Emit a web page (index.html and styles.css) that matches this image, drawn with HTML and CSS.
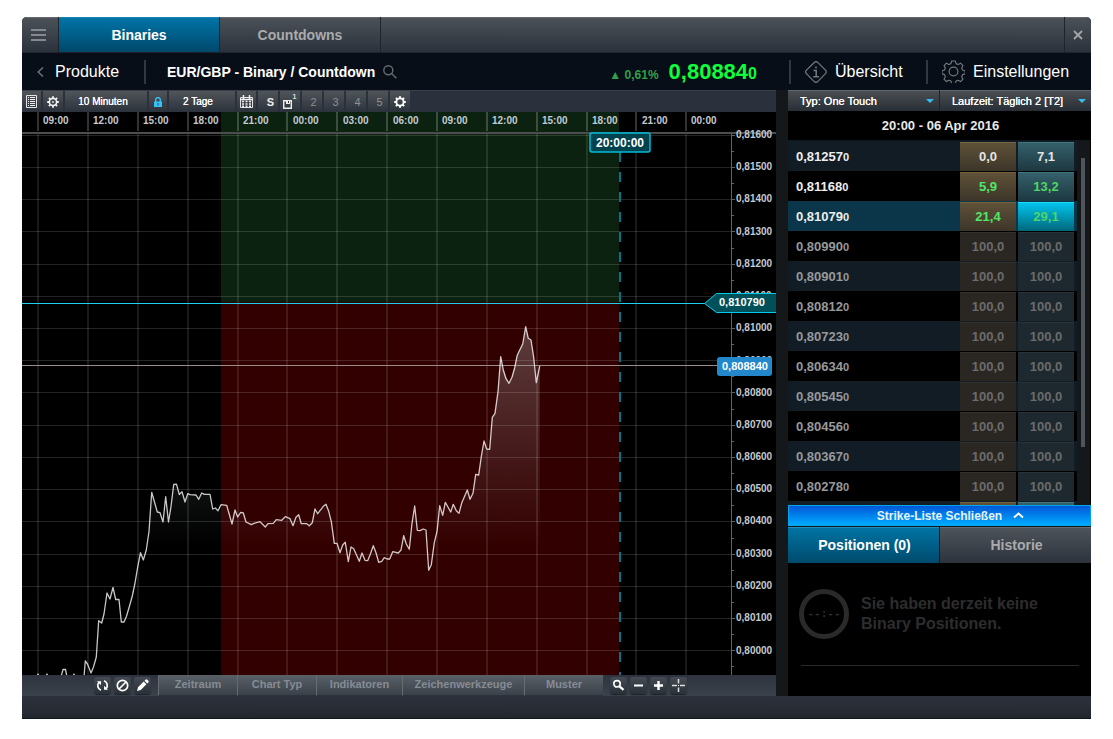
FILE: index.html
```html
<!DOCTYPE html>
<html lang="de">
<head>
<meta charset="utf-8">
<meta name="viewport" content="width=device-width, initial-scale=1">
<title>EUR/GBP - Binary / Countdown</title>
<link rel="stylesheet" href="styles.css">
</head>
<body>
<div class="window">
  <nav class="tabbar">
    <button class="tabbar-menu" type="button" aria-label="Menü">
      <svg width="15" height="12" viewBox="0 0 15 12"><path d="M0 1h15M0 6h15M0 11h15" stroke="#85888c" stroke-width="2"/></svg>
    </button>
    <button class="tabbar-tab is-active" type="button">Binaries</button>
    <button class="tabbar-tab" type="button">Countdowns</button>
    <span class="tabbar-fill"></span>
    <button class="tabbar-close" type="button" aria-label="Fenster">
      <svg width="10" height="10" viewBox="0 0 10 10"><path d="M1 1l8 8M9 1l-8 8" stroke="#a4a6a8" stroke-width="1.8"/></svg>
    </button>
  </nav>

  <header class="header">
    <a class="back" href="#">
      <svg width="7" height="10" viewBox="0 0 7 10"><path d="M6 .5L1.2 5 6 9.500" fill="none" stroke="#6e7377" stroke-width="1.500"/></svg>
      <span>Produkte</span>
    </a>
    <h1 class="title">EUR/GBP - Binary / Countdown</h1>
    <svg class="search" width="14" height="14" viewBox="0 0 14 14" fill="none" stroke="#676b70" stroke-width="1.400"><circle cx="5.300" cy="5.300" r="4.500"/><path d="M8.600 8.600L13.400 13.200"/></svg>
    <div class="quote">
      <span class="change">▲ 0,61%</span>
      <span class="price">0,80884<small>0</small></span>
    </div>
    <nav class="links">
      <a class="link link-overview" href="#">
        <svg width="22" height="22" viewBox="0 0 22 22" fill="none" stroke="#75797d" stroke-width="1.200"><path d="M9.500 1.200q1.500-1.200 3 0l8.200 8.200q1.200 1.600 0 3l-8.200 8.400q-1.500 1.200-3 0L1.200 12.400q-1.200-1.500 0-3z"/><path d="M11 5.500v2M8.500 9.500h2.700v6.200M8.200 15.700h5.800" stroke-width="1.500"/></svg>
        <span>Übersicht</span>
      </a>
      <a class="link" href="#">
        <svg width="23" height="23" viewBox="-12 -12 24 24" fill="none" stroke="#75797d" stroke-width="1.200"><path d="M-1.800-11h3.600l.9 2.800 2.100.9 2.600-1.400 2.500 2.500-1.400 2.600.9 2.100 2.800.9v3l-2.800.9-.9 2.100 1.400 2.600-2.500 2.500-2.600-1.400-2.100.9-.9 2.500h-3.600l-.9-2.500-2.100-.9-2.600 1.400-2.500-2.500 1.400-2.600-.9-2.100-2.600-.9v-3l2.600-.9.9-2.100-1.400-2.600 2.500-2.500 2.600 1.400 2.100-.9z" stroke-linejoin="round"/><circle r="4.600"/></svg>
        <span>Einstellungen</span>
      </a>
    </nav>
  </header>

  <main class="main">
    <section class="chart-panel">
      <div class="tools">
        <button class="tool" type="button" aria-label="Liste"><svg width="11" height="13" viewBox="0 0 11 13"><path d="M.5.5h10v12H.5z" fill="none" stroke="#e4e4e4"/><path d="M2 2.500h1M4 2.500h5M2 4.500h1M4 4.500h5M2 6.500h1M4 6.500h5M2 8.500h1M4 8.500h5M2 10.500h1M4 10.500h5" stroke="#eee"/></svg></button>
        <button class="tool" type="button" aria-label="Optionen"><svg width="12" height="12" viewBox="-6 -6 12 12" fill="none" stroke="#f2f2f2"><circle r="3.600" stroke-width="1.600"/><path d="M0-5.800v2M0 5.800v-2M-5.800 0h2M5.800 0h-2M-4.100-4.100l1.400 1.400M4.100 4.100L2.700 2.700M-4.100 4.100l1.400-1.400M4.100-4.100L2.700-2.700" stroke-width="1.800"/><circle r=".6" stroke-width="1"/></svg></button>
        <button class="tool tool-interval" type="button">10 Minuten</button>
        <button class="tool" type="button" aria-label="Sperren"><svg width="8" height="10" viewBox="0 0 8 10"><path d="M0 4.500h8V10H0z" fill="#35c2f5"/><path d="M1.700 5V2.800a2.300 2.200 0 0 1 4.600 0V5" fill="none" stroke="#35c2f5" stroke-width="1.400"/><path d="M4 6v2.500" stroke="#17536c"/></svg></button>
        <button class="tool tool-range" type="button">2 Tage</button>
        <button class="tool" type="button" aria-label="Kalender"><svg width="13" height="13" viewBox="0 0 13 13"><path d="M.5 2.500h12v10H.5z" fill="none" stroke="#e4e4e4"/><path d="M3.500 0v4M9.500 0v4M0 4.500h13" stroke="#eee" stroke-width="1.500"/><path d="M2 6.500h9M2 9h9M2 11.200h9" stroke="#eee" stroke-dasharray="2 1.500" stroke-width="1.500"/></svg></button>
        <button class="tool tool-s" type="button">S</button>
        <button class="tool tool-save" type="button"><svg width="9" height="9" viewBox="0 0 9 9"><path d="M.7.700h7.600v7.600H.7z" fill="none" stroke="#eee" stroke-width="1.400"/><path d="M3 1h4v3H3z" fill="#eee"/><path d="M5.500 1v2" stroke="#333"/></svg><sup>1</sup></button>
        <button class="tool tool-slot" type="button">2</button>
        <button class="tool tool-slot" type="button">3</button>
        <button class="tool tool-slot" type="button">4</button>
        <button class="tool tool-slot" type="button">5</button>
        <button class="tool" type="button" aria-label="Layout"><svg width="12" height="12" viewBox="-6 -6 12 12" fill="none" stroke="#fff"><circle r="3.600" stroke-width="1.800"/><path d="M0-5.800v2M0 5.800v-2M-5.800 0h2M5.800 0h-2M-4.100-4.100l1.400 1.400M4.100 4.100L2.700 2.700M-4.100 4.100l1.400-1.400M4.100-4.100L2.700-2.700" stroke-width="2"/></svg></button>
      </div>

      <svg class="chart" viewBox="22 112 754 563" role="img" aria-label="EUR/GBP Kursverlauf">
        <defs>
          <linearGradient id="area" gradientUnits="userSpaceOnUse" x1="0" y1="326" x2="0" y2="546">
            <stop offset="0" stop-color="#cfe0e0" stop-opacity=".27"/>
            <stop offset="1" stop-color="#cfe0e0" stop-opacity="0"/>
          </linearGradient>
        </defs>
        <rect x="22" y="112" width="754" height="563" fill="#000"/>
        <rect x="221" y="112" width="398" height="190" fill="#0c2210"/>
        <rect x="221" y="302" width="398" height="373" fill="#330000"/>
        <path class="grid-v" d="M38 134V675M88 134V675M138 134V675M188 134V675M238 134V675M287 134V675M337 134V675M387 134V675M437 134V675M487 134V675M537 134V675M587 134V675M636 134V675M686 134V675"/>
        <path class="grid-top" d="M38 112V131M88 112V131M138 112V131M188 112V131M238 112V131M287 112V131M337 112V131M387 112V131M437 112V131M487 112V131M537 112V131M587 112V131M636 112V131M686 112V131"/>
        <path class="grid-h" d="M22 135.500H731M22 167.500H731M22 199.500H731M22 231.500H731M22 264.500H731M22 296.500H731M22 328.500H731M22 360.500H731M22 392.500H731M22 425.500H731M22 457.500H731M22 489.500H731M22 521.500H731M22 554.500H731M22 586.500H731M22 618.500H731M22 650.500H731"/>
        <path class="ruler" d="M22 133H776"/>
        <path class="axis" d="M731.500 134V675M731 135.500h4M731 167.500h4M731 199.500h4M731 231.500h4M731 264.500h4M731 296.500h4M731 328.500h4M731 360.500h4M731 392.500h4M731 425.500h4M731 457.500h4M731 489.500h4M731 521.500h4M731 554.500h4M731 586.500h4M731 618.500h4M731 650.500h4M731 151.500h3M731 183.500h3M731 215.500h3M731 248.500h3M731 280.500h3M731 312.500h3M731 344.500h3M731 376.500h3M731 409.500h3M731 441.500h3M731 473.500h3M731 505.500h3M731 538.500h3M731 570.500h3M731 602.500h3M731 634.500h3M731 666.500h3"/>
        <path fill="url(#area)" d="M149 546V531.500L151.700 492.300 157.300 512 160 512.700 163 522 165.700 496.700 168.500 522 173.700 484.500H176.500L179.300 494.500 182 491.700 185 502 187.700 493.700 196 495 198.700 499.300 201.700 493 210 494.300 212.700 509 218 510.700 221 504.700 226.700 505.300 232 524 235 510 237.700 517 243.300 513 246 522 265.300 527 281.700 520.300 290 518.700 298.700 514.700 301.300 523.700 309.300 525.700 315 509 317.700 513.700 326 504.300 331.300 521.700 334.300 543.300 340 546H404L409.300 546 412 523.300 414.700 506 417.300 530.300 426 530 428 546H433L437 531.700 439.700 505.700 442.700 515.300 445.300 502.300 450.700 512 453.300 504.300 459 513.300 461.700 503 467.300 490 470 499.300 473 493.300 475.700 474.300 478.700 475 484 441 486.700 449 489.700 449.300 492.300 417.300 495 413.300 498 391.700 500.700 356.700 503.300 370 509 383.300 512 377.300 517.300 355 522.700 344 525.700 326.700 528.300 338.300 531 340 533.700 357.300 536.300 382.700 539.700 366V546Z"/>
        <path class="level-price" d="M22 365.500H718"/>
        <path class="level-strike" d="M22 303.500H706"/>
        <polyline class="series" points="37,677 38,674 39,677 46,676 47,674 48,677 61,677 63,669.500 65.500,669.500 67,677 73,677 74,674 75,677 84,677 85.300,661 87.500,664 91,673 93.500,667 96.300,657 98.700,620.700 101.700,623 104,614 107,593 110,599 113,587.500 115.700,599.500 119,599.500 121.300,622 124,622 126.300,616.700 129.500,606 132.300,596 135,583 137.700,567 140.500,552.700 143.300,560 146.300,550 149,531.500 151.700,492.300 154.700,502.700 157.300,512 160,512.700 163,522 165.700,496.700 168.500,522 171,506.500 173.700,484.500 176.500,484.200 179.300,494.500 182,491.700 185,502 187.700,493.700 190,494.700 196,495 198.700,499.300 201.700,493 204.300,494.300 210,494.300 212.700,509 215.300,508 218,510.700 221,504.700 226.700,505.300 232,524 235,510 237.700,517 240.700,512.300 243.300,513 246,522 251.300,524.700 254,523.300 260,521.700 265.300,527 268,523.700 273.300,523.300 276.300,519.700 281.700,520.300 285.300,516.700 290,518.700 293,525.700 296,517.300 298.700,514.700 301.300,523.700 306.700,523.700 309.300,525.700 312.300,522.700 315,509 317.700,513.700 323.300,506.300 326,504.300 328.700,511.300 331.300,521.700 334.300,543.300 337,543.300 340,552.700 342.700,545 345.300,542.300 348.300,561.700 351,547 353.700,548.700 359.300,561.300 362,553 365,560.300 367.700,560.700 370.300,554.300 373.300,545.700 376,552.700 378.700,562.300 381.700,561.300 384.300,557.700 387,559 389.700,559 392.700,551.700 398.300,553 401,550 403.700,535.700 406.300,544 409.300,549.300 412,523.300 414.700,506 417.300,530.300 420,530.700 423.300,529 426,530 428.700,570.300 431.300,564.700 434.300,542.700 437,531.700 439.700,505.700 442.700,515.300 445.300,502.300 450.700,512 453.300,504.300 456.300,510.700 459,513.300 461.700,503 467.300,490 470,499.300 473,493.300 475.700,474.300 478.700,475 481.300,456.700 484,441 486.700,449 489.700,449.300 492.300,417.300 495,413.300 498,391.700 500.700,356.700 503.300,370 506,378.700 509,383.300 512,377.300 514.700,367.700 517.300,355 522.700,344 525.700,326.700 528.300,338.300 531,340 533.700,357.300 536.300,382.700 539.700,366"/>
        <path class="expiry" d="M620 152V675"/>
        <g class="times">
          <text x="43" y="124">09:00</text><text x="93" y="124">12:00</text><text x="143" y="124">15:00</text><text x="193" y="124">18:00</text><text x="243" y="124">21:00</text><text x="293" y="124">00:00</text><text x="343" y="124">03:00</text><text x="393" y="124">06:00</text><text x="442" y="124">09:00</text><text x="492" y="124">12:00</text><text x="542" y="124">15:00</text><text x="592" y="124">18:00</text><text x="642" y="124">21:00</text><text x="691" y="124">00:00</text>
        </g>
        <g class="prices">
          <text x="736" y="138">0,81600</text><text x="736" y="170">0,81500</text><text x="736" y="202">0,81400</text><text x="736" y="235">0,81300</text><text x="736" y="267">0,81200</text><text x="736" y="299">0,81100</text><text x="736" y="331">0,81000</text><text x="736" y="364">0,80900</text><text x="736" y="396">0,80800</text><text x="736" y="428">0,80700</text><text x="736" y="460">0,80600</text><text x="736" y="492">0,80500</text><text x="736" y="524">0,80400</text><text x="736" y="557">0,80300</text><text x="736" y="589">0,80200</text><text x="736" y="621">0,80100</text><text x="736" y="654">0,80000</text>
        </g>
        <path class="tag-strike" d="M777 293.500H716.500L704.500 303.500 716.500 312.500H777Z"/>
        <text class="tag-text" x="719" y="306">0,810790</text>
        <rect class="tag-price" x="717" y="357" width="55" height="19" rx="3"/>
        <text class="tag-text" x="722" y="370">0,808840</text>
        <rect class="tag-expiry" x="590" y="133" width="60" height="19" rx="2"/>
        <text class="tag-time" x="596" y="147">20:00:00</text>
      </svg>

      <div class="footbar">
        <div class="foot-left">
          <button class="mini" type="button" aria-label="Aktualisieren"><svg width="13" height="13" viewBox="0 0 13 13" fill="none" stroke="#fff" stroke-width="1.700"><path d="M5 11.200A4.900 4.900 0 0 1 3 3.300M8 1.800a4.900 4.900 0 0 1 2 7.900"/><path d="M1 2.300h4v4zM12 10.700H8v-4z" fill="#fff" stroke="none"/></svg></button>
          <button class="mini" type="button" aria-label="Zurücksetzen"><svg width="13" height="13" viewBox="0 0 13 13" fill="none" stroke="#fff" stroke-width="1.700"><circle cx="6.500" cy="6.500" r="5.200"/><path d="M3 10l7-7"/></svg></button>
          <button class="mini" type="button" aria-label="Zeichnen"><svg width="13" height="13" viewBox="0 0 13 13"><path d="M1 12l1-3.800L7.700 2.600l2.700 2.700-5.600 5.700zM8.500 1.800l1.300-1.300q.6-.5 1.200 0l1.500 1.500q.5.600 0 1.200l-1.300 1.300z" fill="#fff"/></svg></button>
        </div>
        <button class="foot-tab w-s" type="button">Zeitraum</button>
        <button class="foot-tab w-s" type="button">Chart Typ</button>
        <button class="foot-tab w-m" type="button">Indikatoren</button>
        <button class="foot-tab w-l" type="button">Zeichenwerkzeuge</button>
        <button class="foot-tab w-s" type="button">Muster</button>
        <div class="foot-right">
          <button class="mini" type="button" aria-label="Lupe"><svg width="13" height="13" viewBox="0 0 13 13" fill="none" stroke="#fff"><circle cx="5" cy="4.800" r="3.200" stroke-width="1.600"/><path d="M7.500 7.300l4 3.500" stroke-width="2.200"/></svg></button>
          <button class="mini" type="button" aria-label="Verkleinern"><svg width="13" height="13" viewBox="0 0 13 13"><path d="M2 6.500h9" stroke="#fff" stroke-width="2"/></svg></button>
          <button class="mini" type="button" aria-label="Vergrößern"><svg width="13" height="13" viewBox="0 0 13 13"><path d="M2 6.500h9M6.500 2v9" stroke="#fff" stroke-width="2.400"/></svg></button>
          <button class="mini" type="button" aria-label="Fadenkreuz"><svg width="13" height="13" viewBox="0 0 13 13"><path d="M0 6.500h5M8 6.500h5M6.500 0v4.500M6.500 8.500V13" stroke="#ddd" stroke-width="1.500"/><path d="M6 6.500h1" stroke="#fff"/></svg></button>
        </div>
      </div>
    </section>

    <aside class="side">
      <div class="filters">
        <label class="filter"><select aria-label="Typ"><option>Typ: One Touch</option></select></label>
        <label class="filter filter-term"><select aria-label="Laufzeit"><option>Laufzeit: Täglich 2 [T2]</option></select></label>
      </div>
      <h2 class="expiry-date">20:00 - 06 Apr 2016</h2>
      <div class="strikes">
        <table class="strike-table">
          <tbody>
            <tr class="live"><th scope="row">0,81257<small>0</small></th><td><button type="button" class="sell">0,0</button></td><td><button type="button" class="buy">7,1</button></td></tr>
            <tr class="live up"><th scope="row">0,81168<small>0</small></th><td><button type="button" class="sell">5,9</button></td><td><button type="button" class="buy">13,2</button></td></tr>
            <tr class="live up selected"><th scope="row">0,81079<small>0</small></th><td><button type="button" class="sell">21,4</button></td><td><button type="button" class="buy">29,1</button></td></tr>
            <tr><th scope="row">0,80990<small>0</small></th><td><button type="button" class="sell">100,0</button></td><td><button type="button" class="buy">100,0</button></td></tr>
            <tr><th scope="row">0,80901<small>0</small></th><td><button type="button" class="sell">100,0</button></td><td><button type="button" class="buy">100,0</button></td></tr>
            <tr><th scope="row">0,80812<small>0</small></th><td><button type="button" class="sell">100,0</button></td><td><button type="button" class="buy">100,0</button></td></tr>
            <tr><th scope="row">0,80723<small>0</small></th><td><button type="button" class="sell">100,0</button></td><td><button type="button" class="buy">100,0</button></td></tr>
            <tr><th scope="row">0,80634<small>0</small></th><td><button type="button" class="sell">100,0</button></td><td><button type="button" class="buy">100,0</button></td></tr>
            <tr><th scope="row">0,80545<small>0</small></th><td><button type="button" class="sell">100,0</button></td><td><button type="button" class="buy">100,0</button></td></tr>
            <tr><th scope="row">0,80456<small>0</small></th><td><button type="button" class="sell">100,0</button></td><td><button type="button" class="buy">100,0</button></td></tr>
            <tr><th scope="row">0,80367<small>0</small></th><td><button type="button" class="sell">100,0</button></td><td><button type="button" class="buy">100,0</button></td></tr>
            <tr><th scope="row">0,80278<small>0</small></th><td><button type="button" class="sell">100,0</button></td><td><button type="button" class="buy">100,0</button></td></tr>
            <tr class="live" aria-hidden="true"><th></th><td><button type="button" class="sell" tabindex="-1"></button></td><td><button type="button" class="buy" tabindex="-1"></button></td></tr>
          </tbody>
        </table>
        <div class="track"><div class="thumb"></div></div>
      </div>
      <button class="collapse" type="button">Strike-Liste Schließen
        <svg width="11" height="7" viewBox="0 0 11 7"><path d="M1 5.500L5.500 1.500 10 5.500" fill="none" stroke="#fff" stroke-width="1.800"/></svg>
      </button>
      <div class="side-tabs">
        <button class="side-tab is-active" type="button">Positionen (0)</button>
        <button class="side-tab" type="button">Historie</button>
      </div>
      <div class="empty">
        <div class="empty-note">
          <div class="ring">--:--</div>
          <p>Sie haben derzeit keine<br>Binary Positionen.</p>
        </div>
        <hr>
      </div>
    </aside>
  </main>
  <footer class="statusbar"></footer>
</div>
</body>
</html>
```

FILE: styles.css
```css
* { box-sizing: border-box; }

body {
  margin: 0;
  padding: 17px 22px;
  background: #fff;
  font-family: "Liberation Sans", Arial, sans-serif;
  color: #fff;
}

button, select {
  margin: 0;
  padding: 0;
  border: 0;
  border-radius: 0;
  font-family: inherit;
  color: inherit;
  cursor: pointer;
}

a { color: inherit; text-decoration: none; }
svg { display: block; flex: none; }

.window {
  min-width: 1000px;
  border-radius: 5px 5px 0 0;
  overflow: hidden;
  background: #070e17;
}

/* Tab bar */
.tabbar {
  display: flex;
  height: 36px;
  background: #1e242b;
  padding-bottom: 1px;
  gap: 1px;
}
.tabbar > * {
  background: linear-gradient(#4b5157, #2c323c);
  border-top: 1px solid #656a6e;
}
.tabbar button {
  display: flex;
  align-items: center;
  justify-content: center;
  font-size: 14px;
  font-weight: bold;
  color: #a9abad;
}
.tabbar .tabbar-menu { width: 36px; padding-right: 4px; }
.tabbar .tabbar-tab { width: 160px; }
.tabbar .is-active {
  background: linear-gradient(#0074a6, #00486b);
  border-top-color: #1b85b2;
  color: #fff;
}
.tabbar-fill { flex: 1; }
.tabbar .tabbar-close { width: 26px; }

/* Header */
.header {
  display: flex;
  align-items: center;
  height: 37px;
}
.back {
  display: flex;
  align-items: center;
  gap: 11px;
  width: 124px;
  height: 24px;
  padding-left: 15px;
  border-right: 2px solid #33383e;
  font-size: 16px;
}
.title {
  margin: 0 8px 0 21px;
  font-size: 14px;
}
.quote {
  display: flex;
  align-items: baseline;
  gap: 10px;
  margin-left: auto;
  padding-right: 32px;
}
.change {
  font-size: 12px;
  font-weight: bold;
  color: #31a049;
}
.price {
  font-size: 22px;
  font-weight: bold;
  color: #0cff3a;
}
.price small { font-size: 16px; }
.links { display: flex; width: 302px; }
.link {
  display: flex;
  align-items: center;
  gap: 8px;
  height: 24px;
  padding-left: 14px;
  border-left: 2px solid #33383e;
  font-size: 16px;
}
.link-overview { width: 137px; }

/* Main columns */
.main {
  display: grid;
  grid-template-columns: minmax(0, 1fr) 303px;
  gap: 12px;
  background: #14181b;
}

/* Chart toolbar */
.tools {
  display: flex;
  gap: 2px;
  height: 22px;
  background: #2b313c;
  border-top: 1px solid #3a4048;
}
.tool {
  display: flex;
  align-items: center;
  justify-content: center;
  width: 20px;
  background: linear-gradient(#50555a, #2c323b);
  font-size: 11px;
  color: #8e9295;
}
.tool:first-child { width: 19px; }
.tool-interval, .tool-range {
  font-size: 10px;
  color: #fff;
  text-shadow: 0 0 0 #fff;
}
.tool-interval { width: 82px; padding-right: 6px; }
.tool-interval + .tool { width: 18px; }
.tool-range { width: 66px; padding-right: 8px; }
.tool-range + .tool { width: 19px; }
.tool-s { font-weight: bold; color: #eee; padding-left: 5px; }
.tool-slot { padding-left: 3px; }
.tool-save { align-items: flex-end; padding-bottom: 3px; gap: 0; }
.tool-save sup {
  align-self: flex-start;
  padding-top: 2px;
  font-size: 8px;
  line-height: 8px;
  color: #fff;
}

/* Chart */
.chart { width: 100%; height: auto; }
.grid-v { stroke: #fff; stroke-opacity: .1; stroke-width: 2; }
.grid-top { stroke: #fff; stroke-opacity: .2; stroke-width: 2; }
.grid-h { stroke: #fff; stroke-opacity: .14; }
.ruler { stroke: #4d4d4d; stroke-width: 2; }
.axis { fill: none; stroke: #626262; }
.series { fill: none; stroke: #fff; stroke-opacity: .78; stroke-width: 1.3; stroke-linejoin: round; }
.level-price { stroke: #9a8c8c; }
.level-strike { stroke: #1fd0ee; }
.expiry { stroke: #00768c; stroke-width: 2; stroke-dasharray: 10 10; }
.times, .prices { font-size: 10px; font-weight: bold; fill: #c3cad1; }
.tag-strike { fill: #00505a; stroke: #00cdee; }
.tag-price { fill: #2388cb; }
.tag-expiry { fill: #00434f; stroke: #00bcd6; stroke-width: 1.5; }
.tag-text { font-size: 11px; font-weight: bold; fill: #fff; }
.tag-time { font-size: 12px; font-weight: bold; fill: #fff; }

/* Chart bottom bar */
.footbar {
  display: flex;
  height: 21px;
  background: linear-gradient(#2d343f, #3b424b);
}
.foot-left, .foot-right {
  display: flex;
  align-items: center;
  gap: 3px;
}
.foot-left {
  width: 136px;
  justify-content: flex-end;
  padding-right: 7px;
}
.foot-right { padding-left: 7px; }
.mini {
  display: flex;
  align-items: center;
  justify-content: center;
  width: 17px;
  height: 17px;
  border-radius: 3px;
  background: linear-gradient(#454b52, #2a3038);
  box-shadow: 0 1px 1px #1d2229;
}
.foot-tab {
  background: linear-gradient(#5a6066, #3b414a);
  border-left: 1px solid #666c72;
  border-bottom: 1px solid #2d333c;
  font-size: 11px;
  font-weight: bold;
  color: #858c95;
  padding-bottom: 2px;
}
.w-s { width: 79px; }
.w-m { width: 86px; }
.w-l { width: 122px; }

/* Side panel */
.side {
  display: flex;
  flex-direction: column;
  background: #000;
}
.filters {
  display: flex;
  gap: 1px;
  height: 21px;
  background: #1f242a;
}
.filter {
  position: relative;
  display: flex;
  flex: 1;
  border-top: 1px solid #63676b;
  background: linear-gradient(#4a4e52, #282e37);
}
.filter::after {
  content: "";
  position: absolute;
  right: 5px;
  top: 8px;
  border: 4px solid transparent;
  border-top-color: #35bdf0;
  border-bottom-width: 0;
  pointer-events: none;
}
.filter select {
  width: 100%;
  appearance: none;
  background: transparent;
  padding-left: 12px;
  padding-bottom: 1px;
  font-size: 11px;
  text-shadow: 0 0 0 #fff;
  outline: 0;
}
.filter option { color: #000; }
.expiry-date {
  margin: 0;
  padding-left: 2px;
  font-size: 13px;
  line-height: 29px;
  text-align: center;
  color: #e9e9e9;
  border-bottom: 1px solid #10161e;
}
.strikes {
  display: flex;
  height: 364px;
  overflow: hidden;
}
.strike-table {
  flex: 1;
  border-collapse: collapse;
  font-size: 13px;
  font-weight: bold;
  color: #97999b;
}
.strike-table tr { height: 30px; background: #000; }
.strike-table tr:nth-child(odd) { background: #121c25; }
.strike-table tr.selected { background: #0b3649; }
.strike-table th { padding: 0 0 0 8px; text-align: left; }
.strike-table .live { color: #eee; }
.strike-table small { font-size: 11px; }
.strike-table td {
  width: 58px;
  padding: 0 2px 0 0;
}
.strike-table td:last-child { padding-right: 3px; width: 59px; }
.strike-table button {
  display: block;
  width: 56px;
  height: 29px;
  font-size: 13px;
  font-weight: bold;
  color: #6a6b6c;
  border-top: 1px solid;
}
.strike-table .sell { background: #2a2722; border-color: #34312b; }
.strike-table .buy { background: #1d292f; border-color: #263439; }
.strike-table .live .sell {
  background: linear-gradient(#5f5138, #3c3529);
  border-color: #75623f;
  color: #e4e4e4;
}
.strike-table .live .buy {
  background: linear-gradient(#34606a, #1d3841);
  border-color: #417580;
  color: #e4e4e4;
}
.strike-table .up button.sell { color: #4fe868; }
.strike-table .up button.buy { color: #4fd565; }
.strike-table .selected button.buy {
  background: linear-gradient(#00c4ea, #00687d);
  border-color: #20dcf8;
}
.track {
  width: 14px;
  padding: 17px 5px 0 4px;
  background: #14181b;
  border-right: 1px solid #000;
}
.thumb {
  height: 289px;
  background: #50555c;
}
.collapse {
  display: flex;
  align-items: center;
  justify-content: center;
  gap: 11px;
  height: 21px;
  padding-left: 22px;
  background: linear-gradient(#0058d8, #00aaff);
  border: 1px solid #00a5ec;
  font-size: 12px;
  font-weight: bold;
  color: #e8f2fb;
}
.side-tabs {
  display: flex;
  gap: 1px;
  height: 37px;
  padding-top: 1px;
  background: #10161c;
}
.side-tab {
  flex: 1;
  background: linear-gradient(#4d5359, #2d333d);
  border-top: 1px solid #666b70;
  padding: 0 0 2px 2px;
  font-size: 14px;
  font-weight: bold;
  color: #a9abad;
}
.side-tab.is-active {
  background: linear-gradient(#0074a3, #004a6c);
  border-top-color: #2290ba;
  color: #fff;
}
.empty { padding: 26px 12px 0 11px; }
.empty-note {
  display: flex;
  gap: 12px;
}
.empty hr {
  margin: 26px 0 0 2px;
  border: 0;
  border-top: 1px solid #292929;
}
.ring {
  display: flex;
  align-items: center;
  justify-content: center;
  flex: none;
  width: 50px;
  height: 50px;
  border: 5px solid #2a2a2a;
  border-radius: 50%;
  font-family: "Liberation Mono", monospace;
  font-size: 11px;
  font-weight: bold;
  color: #343434;
}
.empty p {
  margin: 0;
  padding-top: 5px;
  font-size: 16px;
  font-weight: bold;
  line-height: 20px;
  color: #2d2d2d;
}

.statusbar {
  height: 23px;
  background: linear-gradient(#2c323c, #22272f);
  border-bottom: 1px solid #11161d;
}
```
